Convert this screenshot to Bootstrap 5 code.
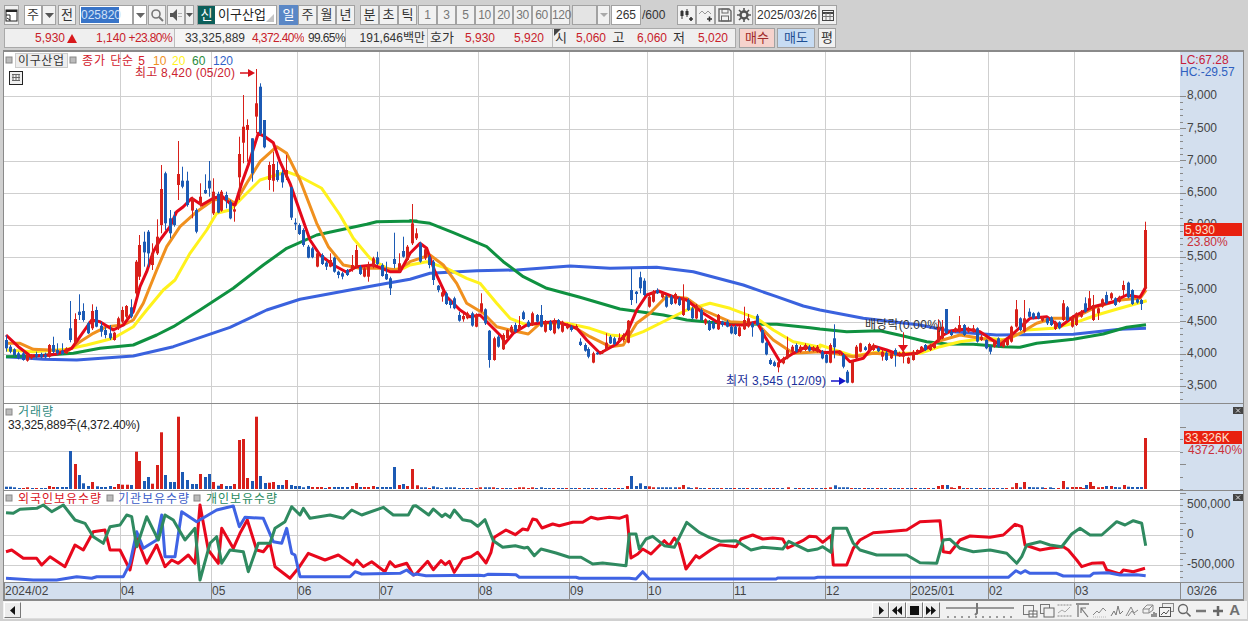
<!DOCTYPE html>
<html lang="ko">
<head>
  <meta charset="UTF-8" />
  <meta name="viewport" content="width=device-width, initial-scale=1.0"/>
  <title>이구산업 차트</title>
  <link href="https://cdn.jsdelivr.net/npm/bootstrap@5.3.0/dist/css/bootstrap.min.css" rel="stylesheet"/>
  <style>
    html, body { height: 100%; overflow: hidden; }

    body {
      background: #d0d0d0;
      color: #222;
      font: 12px/18px "Liberation Sans", "Noto Sans CJK KR", sans-serif;
    }

    .shell { padding: 5px 4px 0 4px; width: 1248px; }

    .tool-row { height: 20px; }
    .mt-quote { margin-top: 3px; }

    .tb {
      height: 20px;
      padding: 0;
      flex: none;
      border: 1px solid #a2a2a2;
      border-radius: 0;
      background: #f1f1f1;
      color: #333;
      font-size: 13px;
      line-height: 18px;
      text-align: center;
    }
    .tb svg { display: block; margin: auto; }
    .tb-num { color: #777; font-size: 12px; letter-spacing: -.3px; }
    .tb-on { background: #5a87c6; color: #fff; border-color: #5a87c6; }
    .tb-white { background: #fff; }
    .tb-blank { background: #e4e4e4; }
    .tb-small { font-size: 12px; }

    .w9 { width: 9px; } .w13 { width: 13px; } .w14 { width: 14px; } .w15 { width: 15px; }
    .w18 { width: 18px; } .w19 { width: 19px; } .w25 { width: 25px; } .w30 { width: 30px; }
    .w36 { width: 36px; } .w38 { width: 38px; } .w54 { width: 54px; } .w64 { width: 64px; } .w80 { width: 80px; }

    .gap1 { margin-left: 1px; } .gap2 { margin-left: 2px; } .gap3 { margin-left: 3px; } .gap5 { margin-left: 5px; }

    .code-box { justify-content: flex-start; text-align: left; padding-left: 1px; }
    .code-sel { background: #3874c8; color: #cfe0f7; display: inline-block; width: 38px; line-height: 16px; font-size: 12px; }
    .name-tag { background: #0c5f5a; color: #fff; width: 17px; height: 18px; line-height: 18px; text-align: center; font-size: 13px; flex: none; }
    .name-text { padding-left: 3px; font-size: 13px; color: #222; }
    .name-corner {
      position: absolute; right: 2px; bottom: 2px; width: 0; height: 0;
      border-left: 8px solid transparent; border-bottom: 8px solid #c4c4c4;
    }
    .count-text { width: 36px; flex: none; color: #333; line-height: 20px; padding-left: 1px; }

    .quote { width: 732px; height: 20px; flex: none; background: #efefef; border: 1px solid #a9a9a9; }
    .qc { flex: none; height: 18px; text-align: right; white-space: nowrap; }
    .qc-line { border-right: 1px solid #bdbdbd; }
    .qc-light { background: #f5f5f5; }
    .qc-h { font-size: 13px; text-align: center; }
    .qc-tight { letter-spacing: -.6px; }
    .red { color: #c8212a; }
    .dark { color: #333; }
    .q-tri { display: inline-block; margin-left: 2px; }
    .q16 { width: 16px; } .q24 { width: 24px; } .q25 { width: 25px; } .q28 { width: 28px; }
    .q36 { width: 36px; } .q37 { width: 37px; } .q39 { width: 39px; } .q42 { width: 42px; }
    .q48 { width: 48px; } .q49 { width: 49px; padding-right: 2px; } .q58 { width: 58px; padding-right: 8px; }
    .q59 { width: 59px; } .q70 { width: 70px; } .q73 { width: 73px; padding-right: 1px; } .q82 { width: 82px; padding-right: 2px; }
    .corner-mark {
      position: absolute; left: 1px; top: 0; width: 0; height: 0;
      border-top: 7px solid #444; border-right: 7px solid transparent;
    }
    .buy { background: #f6d3cd; color: #a02a2a; }
    .sell { background: #c7dcf3; color: #1d4f94; }

    .chart-box {
      margin-top: 2px;
      margin-left: -1px;
      width: 1241px;
      border: 1px solid #8a8a8a;
      border-width: 2px 1px 0 1px;
      background: #fff;
    }
    .pane { border-bottom: 1px solid #8a8a8a; }
    .pane svg { display: block; flex: none; }
    .pane-main { height: 352px; }
    .pane-vol { height: 87px; }
    .pane-ind { height: 92px; }
    .pane-x { height: 18px; background: #d3dfee; border-bottom: 2px solid #8a8a8a; }

    .stext { font: 12px "Liberation Sans", "Noto Sans CJK KR", sans-serif; }

    .bottom-bar { height: 18px; margin-left: -1px; width: 1244px; padding: 0 7px 0 1px; background: #f1f1f1; }
    .sbtn {
      width: 17px; height: 16px; padding: 0; flex: none;
      background: #ececec; border: 1px solid; border-color: #fff #777 #777 #fff; border-radius: 0;
    }
    .sbtn svg { display: block; margin: auto; }
    .track { flex: 1; background: #f5f5f5; border-bottom: 1px solid #ddd; }
    .bi { flex: none; display: block; }
    .bi-a { font: bold 15px/18px "Liberation Sans", sans-serif; color: #707070; }
    .gap4 { margin-left: 4px; } .gap6 { margin-left: 6px; }
  </style>
</head>
<body>

<div class="shell">

  <!-- 1st toolbar -->
  <div class="tool-row d-flex">
    <button class="btn tb w15"><svg width="13" height="13"><rect x="1" y="1" width="11" height="11" fill="#fff" stroke="#222"/><rect x="1" y="1" width="11" height="2" fill="#222"/><path d="M1 6h4v6M2 9l3 2" fill="none" stroke="#222"/></svg></button>
    <button class="btn tb w18 gap5 tb-white">주</button>
    <button class="btn tb w14"><svg width="9" height="5"><path d="M0 0h9L4.500 5z" fill="#555"/></svg></button>
    <button class="btn tb w18 gap2">전</button>
    <button class="btn tb tb-white w54 gap3 d-flex align-items-center code-box"><span class="code-sel">025820</span></button>
    <button class="btn tb w14 tb-white"><svg width="9" height="5"><path d="M0 0h9L4.500 5z" fill="#666"/></svg></button>
    <button class="btn tb w18 gap1"><svg width="14" height="14"><circle cx="6" cy="6" r="4" fill="none" stroke="#777" stroke-width="1.600"/><path d="M9 9l4 4" stroke="#777" stroke-width="2"/></svg></button>
    <button class="btn tb w18 gap1"><svg width="14" height="14"><path d="M1 5h3l4-4v12l-4-4H1z" fill="#555"/><path d="M10 5v1M10 8v1M12 5v1M12 8v1" stroke="#777"/></svg></button>
    <button class="btn tb w9"><svg width="7" height="4"><path d="M0 0h7L3.500 4z" fill="#555"/></svg></button>
    <div class="tb tb-white d-flex gap3 position-relative w80">
      <span class="name-tag">신</span><span class="name-text">이구산업</span><span class="name-corner"></span>
    </div>
    <button class="btn tb w19 gap2 tb-on">일</button>
    <button class="btn tb w19">주</button>
    <button class="btn tb w19">월</button>
    <button class="btn tb w19">년</button>
    <button class="btn tb w19 gap5">분</button>
    <button class="btn tb w19">초</button>
    <button class="btn tb w19">틱</button>
    <button class="btn tb tb-num w19 gap1">1</button>
    <button class="btn tb tb-num w19">3</button>
    <button class="btn tb tb-num w19">5</button>
    <button class="btn tb tb-num w19">10</button>
    <button class="btn tb tb-num w19">20</button>
    <button class="btn tb tb-num w19">30</button>
    <button class="btn tb tb-num w19">60</button>
    <button class="btn tb tb-num w19">120</button>
    <div class="tb tb-blank w25 gap2"></div>
    <button class="btn tb w13"><svg width="8" height="4"><path d="M0 0h8L4 4z" fill="#aaa"/></svg></button>
    <div class="tb tb-white tb-small w30 gap1 text-end pe-1 dark">265</div>
    <div class="count-text">/600</div>
    <button class="btn tb w19"><svg width="15" height="14"><path d="M3 2v9M8 1v8" stroke="#333"/><rect x="1.500" y="3" width="3" height="5" fill="#333"/><rect x="6.500" y="3" width="3" height="4" fill="#333"/><path d="M10 11h4M12 9v4" stroke="#333" stroke-width="1.600"/></svg></button>
    <button class="btn tb w19"><svg width="15" height="14"><path d="M1 6l3-3 3 3 3-3 3 3" fill="none" stroke="#999"/><path d="M9 11h5M11.500 8.500v5" stroke="#333" stroke-width="1.600"/></svg></button>
    <button class="btn tb w19"><svg width="14" height="14"><path d="M1 1h10l2 2v10H1z" fill="none" stroke="#666" stroke-width="1.400"/><rect x="4" y="1" width="6" height="4" fill="none" stroke="#666"/><rect x="3.500" y="8" width="7" height="5" fill="none" stroke="#666"/></svg></button>
    <button class="btn tb w19"><svg width="14" height="14"><circle cx="7" cy="7" r="3.500" fill="none" stroke="#555" stroke-width="2.400"/><path d="M7 0v3M7 11v3M0 7h3M11 7h3M2 2l2 2M10 10l2 2M2 12l2-2M10 4l2-2" stroke="#555" stroke-width="1.600"/></svg></button>
    <div class="tb tb-white tb-small w64 gap2 dark">2025/03/26</div>
    <button class="btn tb w18"><svg width="12" height="11"><rect x=".5" y=".5" width="11" height="10" fill="none" stroke="#444"/><path d="M0 3h12" stroke="#444" stroke-width="2"/><path d="M.5 6.500h11M4 3v7M8 3v7" stroke="#777"/></svg></button>
  </div>

  <!-- 2nd toolbar -->
  <div class="tool-row d-flex mt-quote">
    <div class="quote d-flex">
      <div class="qc q73 red">5,930<svg class="q-tri" width="10" height="9"><path d="M5 0l5 9H0z" fill="#d8191c"/></svg></div>
      <div class="qc q48 red">1,140</div>
      <div class="qc q49 red qc-line qc-tight">+23.80%</div>
      <div class="qc q70 qc-light dark">33,325,889</div>
      <div class="qc q59 qc-light red qc-tight">4,372.40%</div>
      <div class="qc q42 qc-light dark qc-line qc-tight">99.65%</div>
      <div class="qc q82 dark qc-line">191,646백만</div>
      <div class="qc q28 dark qc-h">호가</div>
      <div class="qc q39 red">5,930</div>
      <div class="qc q58 red qc-line">5,920</div>
      <div class="qc q16 dark qc-h position-relative"><span class="corner-mark"></span>시</div>
      <div class="qc q37 red">5,060</div>
      <div class="qc q25 dark qc-h">고</div>
      <div class="qc q36 red">6,060</div>
      <div class="qc q24 dark qc-h">저</div>
      <div class="qc q37 red">5,020</div>
    </div>
    <button class="btn tb buy w36 gap3">매수</button>
    <button class="btn tb sell w38 gap2">매도</button>
    <button class="btn tb w18 gap3">평</button>
  </div>

  <!-- chart -->
  <div class="chart-box">
    <div class="pane pane-main d-flex">
      <svg id="mainPlot" width="1176" height="351" viewBox="4 52 1176 351"></svg>
      <svg id="mainAxis" width="63" height="351" viewBox="1180 52 63 351"></svg>
    </div>
    <div class="pane pane-vol d-flex">
      <svg id="volPlot" width="1176" height="86" viewBox="4 404 1176 86"></svg>
      <svg id="volAxis" width="63" height="86" viewBox="1180 404 63 86"></svg>
    </div>
    <div class="pane pane-ind d-flex">
      <svg id="indPlot" width="1176" height="91" viewBox="4 491 1176 91"></svg>
      <svg id="indAxis" width="63" height="91" viewBox="1180 491 63 91"></svg>
    </div>
    <div class="pane-x d-flex">
      <svg id="xAxis" width="1239" height="16" viewBox="4 583 1239 16"></svg>
    </div>
  </div>

  <!-- scroll + tools -->
  <div class="bottom-bar d-flex align-items-center">
    <button class="btn sbtn"><svg width="6" height="9"><path d="M5 0v9L0 4.500z" fill="#111"/></svg></button>
    <div class="track align-self-stretch"></div>
    <button class="btn sbtn"><svg width="6" height="9"><path d="M1 0v9l5-4.500z" fill="#111"/></svg></button>
    <button class="btn sbtn"><svg width="11" height="9"><path d="M5 0v9L0 4.500zM10 0v9L5 4.500z" fill="#111"/></svg></button>
    <button class="btn sbtn"><svg width="9" height="9"><rect width="9" height="9" fill="#111"/></svg></button>
    <button class="btn sbtn"><svg width="11" height="9"><path d="M0 0v9l5-4.500zM5 0v9l5-4.500z" fill="#111"/></svg></button>
    <svg class="bi gap5" width="72" height="17"><path d="M1 6h68" stroke="#999" stroke-width="2"/><path d="M32 1v10l-2 2" stroke="#777" stroke-width="2" fill="none"/><path d="M3 14v2M10 14v2M17 14v2M24 14v2M31 14v2M38 14v2M45 14v2M52 14v2M59 14v2M66 14v2" stroke="#444"/></svg>
    <svg class="bi gap6" width="15" height="15"><rect x=".5" y="2.500" width="10" height="9" fill="none" stroke="#777"/><rect x="6" y="8" width="8" height="6" fill="#fff" stroke="#666"/><path d="M10 8v6M6 11h8" stroke="#666"/></svg>
    <svg class="bi gap2" width="15" height="15"><rect x=".5" y="1.500" width="9" height="9" fill="none" stroke="#777"/><rect x="4" y="5" width="10" height="9" fill="#f1f1f1" stroke="#666"/></svg>
    <svg class="bi gap2" width="15" height="15"><path d="M.5 2h14M.5 13h14" stroke="#888" stroke-dasharray="2 1"/><path d="M1 10l4-3 3 2 5-5" stroke="#aaa" fill="none"/></svg>
    <svg class="bi gap3" width="15" height="15"><path d="M1 1h13" stroke="#333"/><path d="M3 2v12" stroke="#555"/><path d="M13 14L6 5M6 10V5h5" fill="none" stroke="#777" stroke-width="1.200"/></svg>
    <svg class="bi gap2" width="15" height="15"><path d="M1 12l4-4 2 2 4-5 3 3" fill="none" stroke="#888"/><path d="M1 14h13" stroke="#bbb" stroke-dasharray="1 1"/></svg>
    <svg class="bi gap3" width="14" height="15"><path d="M1 13l3-5 2 4 2-9 2 8 3-3" fill="none" stroke="#777"/></svg>
    <svg class="bi gap1" width="14" height="15"><path d="M1 13l5-9 3 6 4-3M3 13l4-5 3 4" fill="none" stroke="#888"/></svg>
    <svg class="bi gap3" width="15" height="15"><path d="M1 6l4-4h6v5l-4 3H1zM1 6h6v4M7 6l4-4" fill="none" stroke="#888"/><path d="M10 14v-3M12 14v-5M14 14v-4" stroke="#333"/></svg>
    <svg class="bi gap2" width="15" height="15"><rect x="3.500" y=".5" width="11" height="8" fill="#eee" stroke="#888"/><rect x=".5" y="4.500" width="11" height="9" fill="#f4f4f4" stroke="#555"/><path d="M2 12l3-3 2 2 3-4" fill="none" stroke="#555"/></svg>
    <svg class="bi gap3" width="14" height="15"><circle cx="6" cy="6" r="4.500" fill="none" stroke="#666" stroke-width="1.300"/><path d="M9.500 9.500l4 4" stroke="#666" stroke-width="1.600"/></svg>
    <svg class="bi gap4" width="12" height="15"><path d="M1 8h10" stroke="#777" stroke-width="2.500"/></svg>
    <svg class="bi gap5" width="12" height="15"><path d="M1 8h10M6 3v10" stroke="#666" stroke-width="2.500"/></svg>
    <span class="bi bi-a gap5">A</span>
  </div>
</div>

<script>
// all chart data is in page pixels, read at 3x (x = ox + z/3, y = oy + z/3)
const RED = '#e4081a', ORANGE = '#f0901e', YELLOW = '#fff21c', GREEN = '#0f9140', BLUE = '#3a62de';
const C_RED = '#d8201a', C_BLUE = '#1c5ab4';
const GRID = '#cfcfcf';
const V_GRID = [120, 211, 297, 379, 478, 569, 647, 733, 825, 910, 988, 1074];

const poly = (str, ox, oy) => str.trim().split(/\s+/).map(p => {
  const [a, b] = p.split(',').map(Number);
  return `${(ox + a / 3).toFixed(1)},${(oy + b / 3).toFixed(1)}`;
}).join(' ');

const line = (pts, color, w) => `<polyline points="${pts}" fill="none" stroke="${color}" stroke-width="${w}" stroke-linejoin="round"/>`;

const text = (x, y, s, color, extra = '') => `<text class="stext" x="${x}" y="${y}" fill="${color}" ${extra}>${s}</text>`;

function grid(hLines, top, bottom) {
  let out = '';
  for (const y of hLines) out += `<path d="M4 ${y + .5}H1180" stroke="${GRID}"/>`;
  for (const x of V_GRID) out += `<path d="M${x + .5} ${top}V${bottom}" stroke="${GRID}"/>`;
  return out;
}

const square = (x, y) => `<rect x="${x - 3}" y="${y - 3}" width="6" height="6" fill="#bbb" stroke="#888"/>`;

/* ---------- price pane ---------- */
const MA_RED = [
  [0, 90, '18,735 55,770 90,797 130,797 170,792 215,775 240,740 275,690 300,695 340,720 370,705 400,665 420,590 440,545 460,485 480,450 510,410 530,365 550,350 575,325 605,345 640,325 665,318 690,340 705,345 725,280 745,225 775,130 795,140 820,158 840,215 870,280 900,365 930,450 960,495 1000,525 1040,547 1070,530 1120,525 1170,545 1200,545 1225,500'],
  [410, 190, '0,190 30,160 50,175 75,245 110,320 150,360 180,380 210,375 240,405 275,440 285,460 310,430 350,405 395,398 440,395 500,415 530,450 570,490 620,462 650,430 680,360 710,315 745,303 790,320 830,330 880,370 920,395 960,405 1005,405 1040,395 1065,440 1110,515 1150,490 1185,472 1225,480'],
  [820, 210, '5,428 60,425 90,455 130,445 160,408 200,420 240,435 290,430 340,405 370,375 395,362 440,357 480,365 540,405 575,375 630,325 680,320 720,350 760,320 820,290 880,275 920,255 960,262 978,230']
];
const MA_ORANGE = [
  [0, 90, '18,760 60,760 100,778 150,780 200,785 240,755 280,730 320,710 370,705 400,690 430,640 470,540 500,470 540,410 590,365 640,330 680,325 705,340 740,280 780,215 830,170 860,190 900,270 950,400 985,470 1030,525 1080,535 1150,535 1190,540 1225,520'],
  [410, 190, '0,215 60,195 100,225 140,280 170,340 220,370 260,410 300,420 355,432 390,400 440,395 490,410 540,440 600,470 640,465 680,400 720,370 770,318 830,325 880,360 960,395 1040,400 1090,450 1150,490 1230,485'],
  [820, 210, '40,430 100,440 160,430 240,435 290,430 350,395 420,375 480,385 540,395 600,370 650,340 700,325 760,325 830,290 900,270 960,265 978,240']
];
const MA_YELLOW = [
  [0, 90, '18,780 100,785 200,778 260,765 340,745 400,710 440,660 490,600 525,570 570,490 620,420 650,370 690,360 720,330 780,270 860,245 900,260 965,295 1020,375 1060,445 1110,505 1170,540 1210,535'],
  [410, 190, '0,225 50,215 110,235 170,265 210,280 260,340 300,385 350,405 400,400 470,400 540,415 600,435 660,440 700,425 770,390 830,360 900,340 960,355 1040,385 1090,420 1150,455 1230,472'],
  [820, 210, '0,405 60,425 100,438 180,425 240,430 300,430 360,410 420,395 500,385 560,390 620,360 700,355 760,340 830,315 900,295 980,272']
];
const MA_GREEN = [
  [0, 90, '18,800 100,798 220,790 300,775 400,765 470,735 520,710 600,660 700,595 790,525 860,475 950,435 1100,403 1130,395 1250,393'],
  [410, 190, '0,92 60,100 130,128 230,170 280,215 340,260 410,295 510,322 630,357 760,375 830,390 900,397 1000,402 1100,403 1200,413 1230,417'],
  [820, 210, '0,357 80,365 180,362 250,378 320,395 380,402 460,403 550,410 600,412 650,400 760,388 850,372 920,352 978,344']
];
const MA_BLUE = [
  [0, 90, '18,800 130,808 230,810 400,798 520,770 690,712 800,660 900,628 1050,600 1170,578 1230,568'],
  [410, 190, '0,268 60,250 200,242 320,240 480,228 600,235 740,232 850,245 1000,285 1100,320 1180,348 1230,360'],
  [820, 210, '0,300 130,325 300,345 400,365 530,375 760,373 900,358 978,355']
];
const joined = parts => parts.map(([ox, oy, s]) => poly(s, ox, oy)).join(' ');

// x, wick top, body top, body bottom, wick bottom, colour
const CANDLES = [
  [0, 90, `19,735,750,775,785,b 31,765,770,785,790,b 43,775,778,795,800,b 55,785,790,805,808,b 70,785,790,810,812,b 82,792,795,812,815,r 94,792,795,805,808,r 108,785,792,800,805,b 122,788,792,802,805,b 135,788,794,802,805,b 148,762,765,800,803,r 160,740,765,785,790,b 172,760,780,790,795,b 185,760,782,792,795,b 198,772,775,790,792,r 211,633,715,750,757,b 225,670,687,760,765,r 238,613,665,675,690,b 250,640,663,690,695,b 263,695,700,730,732,b 277,643,663,715,720,r 289,650,660,710,712,b 302,695,707,725,740,b 316,712,720,735,745,b 329,705,730,745,750,b 341,725,728,750,752,r 355,680,685,715,720,r 367,650,660,695,700,r 379,645,648,680,685,r 394,628,652,680,685,b 407,510,515,610,620,r 418,435,465,560,570,r 433,425,455,487,530,b 445,420,425,490,530,b 457,460,490,525,540,r 472,388,440,490,495,r 484,225,297,405,430,r 496,245,250,400,420,b 510,360,385,430,445,b 523,365,378,405,410,b 535,153,252,285,330,r 547,230,272,290,295,b 562,245,272,345,350,b 575,320,325,362,385,r 587,355,360,425,430,b 601,280,320,345,350,r 614,253,300,310,312,b 626,213,272,295,320,b 640,265,305,370,375,r 653,305,312,368,370,b 664,300,305,362,365,r 678,305,315,330,355,b 691,330,335,385,388,b 703,345,358,365,395,r 718,140,192,262,330,r 730,15,110,158,220,r 742,88,105,120,215,r 757,145,145,250,275,b 769,-60,40,80,130,r 781,-20,-10,130,135,b 793,90,90,172,175,b 808,215,225,270,300,r 820,185,222,272,305,r 832,215,240,270,275,b 847,240,248,277,293,b 859,195,240,262,270,r 872,290,292,383,390,b 886,385,398,403,420,b 898,400,405,432,435,b 910,415,420,465,470,b 925,465,470,503,505,b 937,470,475,502,505,b 950,485,490,530,532,r 965,490,495,522,525,b 977,512,518,530,540,b 990,490,510,530,532,r 1003,500,503,545,548,b 1015,542,545,555,565,b 1027,545,550,560,568,b 1040,537,540,555,558,b 1055,495,525,540,545,r 1067,465,480,530,535,r 1080,525,530,552,555,b 1093,530,535,560,562,r 1105,515,525,560,575,r 1118,500,505,530,535,r 1132,485,502,522,525,b 1145,520,525,558,560,b 1157,515,552,568,570,b 1171,560,565,595,615,b 1183,428,507,522,535,b 1196,490,520,545,548,r 1210,440,483,500,503,b 1222,465,470,510,513,r`],
  [410, 190, `5,42,100,160,165,r 18,115,130,145,150,r 31,155,160,215,218,b 44,175,178,205,210,r 57,195,200,225,235,b 70,210,215,270,285,b 83,285,287,300,307,b 95,303,307,320,335,r 108,305,310,342,345,b 121,328,333,345,355,b 133,320,325,355,358,b 148,365,375,392,395,b 160,372,378,388,395,r 172,365,370,385,388,r 186,365,370,407,410,b 199,370,375,410,412,r 212,310,340,365,368,r 226,355,358,400,405,b 238,420,422,510,533,b 251,440,445,510,512,r 265,435,440,470,473,b 278,430,435,478,480,r 290,418,420,445,448,r 303,405,410,427,430,r 316,398,405,425,428,b 327,378,405,420,422,r 340,362,367,387,390,b 354,390,395,410,412,b 367,365,370,405,408,r 380,372,375,395,398,b 393,345,375,410,412,b 406,390,395,425,428,r 419,390,395,420,423,b 433,385,390,430,433,r 445,387,390,415,418,b 457,392,395,425,428,r 470,400,405,415,418,r 484,405,410,420,425,b 497,403,408,418,420,r 511,445,455,465,468,b 524,460,465,482,485,b 535,472,477,500,505,b 548,485,490,518,520,r 562,485,488,492,494,b 575,480,484,490,492,r 587,430,458,480,483,r 601,435,440,460,462,b 613,440,445,462,465,b 626,430,443,450,455,r 640,430,435,450,455,r 653,390,392,458,460,r 664,235,300,330,345,b 679,303,305,312,340,b 691,245,262,295,310,b 703,265,272,315,318,b 718,315,320,350,353,r 730,300,305,335,338,r 742,295,300,310,312,b 756,308,312,322,325,r 769,315,320,350,353,b 782,315,320,342,345,b 794,308,312,340,343,r 808,320,325,345,348,b 820,283,323,375,378,r 833,325,330,360,363,b 847,350,355,385,388,b 859,342,347,385,388,r 872,355,360,390,393,b 886,385,388,400,405,r 898,390,395,420,423,b 910,393,398,415,418,b 925,372,375,418,420,r 937,392,395,405,410,b 950,390,395,410,412,b 963,405,410,430,433,b 976,405,410,432,435,b 988,408,412,438,440,r 1003,350,390,418,420,r 1015,372,385,410,413,r 1027,395,400,412,440,b 1040,372,377,405,408,b 1055,415,420,458,460,b 1067,455,458,493,496,b 1079,505,510,522,525,b 1093,512,517,528,530,b 1105,512,517,532,547,r 1118,500,505,520,523,r 1132,440,480,505,508,r 1145,465,470,485,488,r 1157,460,465,485,488,b 1170,465,470,485,488,r 1185,460,465,480,483,r 1197,465,470,482,485,b 1210,468,472,482,485,r 1222,465,470,485,488,r`],
  [820, 210, `5,420,425,445,448,b 18,432,435,458,460,b 30,400,405,458,460,r 43,343,385,412,445,b 56,420,425,432,435,r 70,430,435,470,475,b 82,480,485,518,520,b 95,452,455,518,520,r 108,405,410,445,447,r 121,398,400,425,427,r 134,408,412,420,422,b 147,398,402,420,423,r 160,400,405,420,423,r 173,410,414,424,426,b 186,420,425,440,452,r 199,423,428,450,453,b 212,425,430,445,447,r 225,415,420,435,470,b 238,425,428,436,440,r 250,367,425,440,460,r 265,440,443,460,462,r 278,420,425,450,452,r 290,418,420,430,433,r 302,408,410,420,423,r 315,402,405,420,423,b 330,402,405,420,423,r 342,400,403,414,416,r 355,328,350,395,398,r 366,330,350,385,388,r 379,297,297,370,372,b 392,360,365,375,378,b 405,352,355,365,368,r 418,318,345,365,368,r 432,342,345,375,378,b 445,350,355,365,368,r 458,345,355,365,368,r 472,352,355,395,398,b 484,375,380,390,393,r 497,388,390,415,418,b 510,405,410,425,433,b 523,392,395,410,413,r 535,382,385,410,413,b 548,392,395,410,413,r 562,387,390,405,408,r 574,347,350,395,398,r 587,270,298,350,353,r 600,322,325,360,363,b 613,270,325,365,368,r 626,295,305,320,323,b 640,307,310,325,328,b 653,305,308,325,328,b 665,318,322,332,335,r 680,322,325,340,345,b 692,319,322,345,348,b 705,332,335,357,360,r 718,334,337,355,358,b 730,270,280,330,333,r 742,288,292,330,333,b 757,317,320,350,353,r 769,307,310,345,348,r 782,300,305,320,323,r 796,262,280,305,308,b 808,243,265,295,298,r 820,255,285,330,333,r 833,292,295,310,330,r 847,265,268,290,293,r 859,245,255,280,283,b 872,247,250,265,270,r 885,262,265,285,288,b 898,257,260,275,278,r 910,212,225,240,255,r 925,215,218,262,265,b 937,238,240,282,285,b 950,265,268,278,281,b 964,267,270,282,300,b 976,35,60,235,238,r`]
];

function candleMarkup() {
  let out = '';
  for (const [ox, oy, s] of CANDLES) {
    for (const item of s.trim().split(/\s+/)) {
      const [x, w1, b1, b2, w2, c] = item.split(',');
      const px = Math.round(ox + x / 3);
      const color = c === 'r' ? C_RED : C_BLUE;
      const top = oy + b1 / 3;
      out += `<path d="M${px + .5} ${(oy + w1 / 3).toFixed(1)}V${(oy + w2 / 3).toFixed(1)}" stroke="${color}"/>`;
      out += `<rect x="${px - 1}" y="${top.toFixed(1)}" width="3" height="${Math.max((b2 - b1) / 3, 1.5).toFixed(1)}" fill="${color}"/>`;
    }
  }
  return out;
}

const PRICE_Y = [96, 129, 161, 193, 225, 257, 290, 322, 354, 386];

let main = grid(PRICE_Y, 52, 403);
main += line(joined(MA_BLUE), BLUE, 3) + line(joined(MA_GREEN), GREEN, 3) + line(joined(MA_YELLOW), YELLOW, 3)
      + line(joined(MA_ORANGE), ORANGE, 3) + line(joined(MA_RED), RED, 3);
main += candleMarkup();
// legend
main += square(9, 60)
  + `<rect x="15.500" y="53.500" width="52" height="14" fill="#eee" stroke="#ccc"/>`
  + text(18, 65, '이구산업', '#333', 'textLength="46"')
  + square(73, 60)
  + text(82, 65, '종가 단순 5', '#d2202c', 'textLength="63"')
  + text(153, 65, '10', ORANGE) + text(172, 65, '20', YELLOW) + text(192, 65, '60', '#2a8a3c') + text(213, 65, '120', '#2f62c8');
main += `<rect x="9.500" y="71.500" width="13" height="13" fill="#f0f0f0" stroke="#222"/><path d="M12 74.500h8M12 77.500h8M12 80.500h8M13 74v7M16 74v7M19 74v7" stroke="#666"/>`;
// high / low marks
main += text(135, 77, '최고 8,420 (05/20)', '#cc2230', 'textLength="100"');
main += `<path d="M240 73h10" stroke="#d8101a" stroke-width="1.500"/><path d="M248 69l7 4-7 4z" fill="#d8101a"/><path d="M256.500 69V90" stroke="${C_RED}"/>`;
main += text(726, 385, '최저 3,545 (12/09)', '#1a2f9a', 'textLength="100"');
main += `<path d="M831 381h10" stroke="#1414c8" stroke-width="1.500"/><path d="M839 377l7 4-7 4z" fill="#1414c8"/>`;
main += text(865, 329, '배당락(0.00%)', '#333', 'textLength="77"');
main += `<path d="M898 345h10l-5 7z" fill="#e0101a"/>`;
document.getElementById('mainPlot').innerHTML = main;

function axisTicks(top, bottom, step, bigEvery, start) {
  let out = '';
  let n = 0;
  for (let y = start; y < bottom; y += step, n++) {
    if (y < top) continue;
    out += `<path d="M1180 ${Math.round(y) + .5}h${n % bigEvery === 0 ? 6 : 3}" stroke="#8a8a8a"/>`;
  }
  return out;
}

const redBox = (y, label) => `<rect x="1184" y="${y}" width="58" height="13" fill="#e8200f"/>` + text(1185, y + 11, label, '#fde0d0');

let mAxis = `<rect x="1180" y="52" width="63" height="351" fill="#d3dfee"/>`;
mAxis += axisTicks(84, 403, 6.44, 5, 96);
[['8,000', 96], ['7,500', 129], ['7,000', 161], ['6,500', 193], ['6,000', 225], ['5,500', 257], ['5,000', 290], ['4,500', 322], ['4,000', 354], ['3,500', 386]]
  .forEach(([s, y]) => { mAxis += text(1187, y + 3, s, '#444'); });
mAxis += text(1180, 64, 'LC:67.28', '#c8203a') + text(1180, 76, 'HC:-29.57', '#2f5fc0');
mAxis += redBox(223, '5,930') + text(1187, 246, '23.80%', '#c8303a');
document.getElementById('mainAxis').innerHTML = mAxis;

/* ---------- volume pane ---------- */
const VOL = [
  [0, 400, 267, 'b18,260 b30,260 b42,262 r82,262 b122,264 r148,258 r160,261 b172,261 b185,261 b198,261 b211,153 r225,192 b238,225 b250,250 b264,258 r277,246 b290,259 b303,261 b316,261 b329,258 r341,261 r355,252 r367,254 r380,254 b394,255 r407,155 r418,183 b433,243 b445,231 r457,251 r472,195 r484,97 b496,225 b510,246 b523,246 r535,50 b547,216 b562,240 b575,252 b587,252 r601,222 b614,231 b626,222 r640,246 b653,257 r664,252 b678,258 b691,258 r703,252 r718,120 r730,117 r742,234 b757,243 r769,50 b781,228 b794,249 r808,248 r820,246 b833,255 b847,255 r859,240 b872,255 b885,258 b898,258 b910,262 b925,258 r937,261 r950,261 r963,261 r988,261 b1003,261 b1015,261 b1027,261 b1040,261 r1055,258 r1067,249 b1080,261 r1093,261 r1105,261 r1118,258 b1132,261 b1145,261 b1157,261 b1171,261 b1183,201 r1196,255 b1210,252 r1222,258 r1235,207'],
  [416, 404, 257, 'r2,244 b14,250 b26,250 r38,252 b52,247 b64,250 b76,252 b89,250 b102,250 b115,250 r191,250 b206,250 b218,250 r232,250 r310,250 r322,250 r348,250 b376,250 r632,246 b646,216 b660,246 b672,238 b686,246 r700,247 r712,250 b725,250 b738,250 b750,250 b763,250 b776,250 r788,250 r802,243 b815,250 r840,250 r1115,250 r1243,250'],
  [830, 400, 267, 'b14,256 b26,262 b40,262 b52,262 r325,258 r337,255 b350,255 r363,262 r388,258 r545,262 r557,249 b570,262 r583,246 b596,261 b609,262 b622,262 b635,262 b661,262 r700,243 b712,262 r725,261 r738,261 r751,261 b767,255 r779,246 r790,258 r803,262 r816,261 b829,258 r842,258 b855,261 b868,262 r881,255 b894,260 b907,261 b920,261 b933,261 r946,114']
];

let vol = grid([451], 404, 490);
const taken = [];
for (const [ox, oy, base, s] of VOL) {
  for (const item of s.split(' ')) {
    const color = item[0] === 'r' ? C_RED : C_BLUE;
    const [zx, zy] = item.slice(1).split(',').map(Number);
    const x = Math.round(ox + zx / 3);
    const y = oy + zy / 3;
    taken.push(x);
    vol += `<rect x="${x - 1}" y="${y.toFixed(1)}" width="3" height="${(489 - y).toFixed(1)}" fill="${color}"/>`;
  }
}
// the quiet days are only a thin dash on the base line
for (let i = 0, x = 6; x < 1142; i++, x += 4.31) {
  if (taken.some(t => Math.abs(t - x) < 2.5)) continue;
  vol += `<rect x="${Math.round(x) - 1}" y="488" width="3" height="1" fill="${i % 3 === 1 ? C_RED : C_BLUE}"/>`;
}
vol += square(9, 412) + text(18, 416, '거래량', '#2f8a80', 'textLength="35"');
vol += text(8, 429, '33,325,889주(4,372.40%)', '#222', 'textLength="132"');
document.getElementById('volPlot').innerHTML = vol;

const closeIcon = y => `<rect x="1233" y="${y}" width="10" height="7" fill="#444"/><path d="M1236 ${y + 1.500}l4 4M1240 ${y + 1.500}l-4 4" stroke="#ddd"/>`;

let vAxis = `<rect x="1180" y="404" width="63" height="86" fill="#d3dfee"/>`;
vAxis += axisTicks(420, 490, 12.4, 3, 427) + closeIcon(407);
vAxis += redBox(431, '33,326K') + text(1188, 454, '4372.40%', '#c8303a');
document.getElementById('volAxis').innerHTML = vAxis;

/* ---------- holdings pane ---------- */
const IND_RED = [
  [0, 400, '18,455 35,450 70,475 110,475 125,495 150,470 195,500 225,435 250,450 280,395 315,390 330,450 360,450 390,510 410,415 440,490 470,435 495,500 515,480 535,490 565,465 585,490 600,315 625,450 655,490 665,385 700,445 720,400 742,360 770,450 790,455 810,430 825,500 870,535 895,505 925,460 975,480 1015,465 1060,495 1070,480 1090,500 1115,485 1155,515 1170,485 1185,500 1220,490 1240,525'],
  [416, 404, '0,510 35,472 52,497 75,470 88,482 100,472 115,505 140,465 165,458 185,445 210,477 225,445 235,400 270,378 298,392 320,375 335,378 350,345 362,348 378,372 410,360 430,365 470,355 500,355 525,340 545,345 580,340 610,343 633,335 640,410 645,462 665,450 680,435 705,450 725,430 745,410 760,425 775,402 790,420 810,495 840,455 850,462 885,437 910,422 960,428 975,405 1010,393 1040,405 1070,402 1100,405 1115,432 1160,410 1180,397 1200,398 1220,415 1245,395'],
  [830, 400, '10,495 50,495 70,445 90,420 130,398 170,395 230,390 270,365 330,362 340,455 360,458 390,420 420,408 480,412 520,405 555,373 575,380 585,435 630,450 660,445 700,440 715,450 740,480 755,500 785,490 820,488 830,510 870,522 880,510 910,515 945,505']
];
const IND_GREEN = [
  [0, 400, '18,338 40,340 60,328 110,325 130,315 155,335 190,315 225,360 255,370 280,410 310,430 330,380 360,375 380,345 395,350 410,440 440,350 475,420 495,345 520,360 555,420 585,385 600,540 630,430 650,410 665,490 690,450 730,455 745,515 775,430 810,430 825,385 855,365 875,320 900,345 910,325 930,355 990,345 1030,355 1055,330 1085,345 1150,322 1180,345 1225,345 1240,318'],
  [416, 404, '0,305 38,333 52,315 78,338 88,330 102,340 115,318 140,347 165,352 185,367 207,347 232,410 260,430 298,425 325,432 335,430 355,455 375,435 395,440 420,447 460,460 495,460 530,480 560,477 630,485 640,390 660,390 670,435 690,405 710,397 745,425 775,430 790,400 812,355 850,385 880,400 915,412 960,410 1005,438 1040,430 1100,435 1118,412 1175,440 1205,435 1220,428 1245,445'],
  [830, 400, '10,385 50,385 70,430 90,450 140,465 230,465 270,488 320,490 340,420 360,418 390,445 430,455 480,450 530,460 560,490 575,470 590,435 630,425 660,435 695,440 725,402 750,385 780,405 815,405 860,365 885,375 910,362 935,370 947,437']
];
const IND_BLUE = [
  [0, 400, '18,535 100,540 170,540 230,530 275,535 290,530 370,530 390,490 410,395 430,445 470,420 485,345 495,470 525,470 545,335 590,365 650,330 700,318 718,380 735,352 790,355 820,425 845,430 860,385 875,460 885,465 900,530 1050,530 1065,515 1085,522 1200,520 1220,510 1240,525'],
  [416, 404, '0,510 30,515 190,514 205,515 215,511 300,512 310,520 480,520 490,523 640,523 660,525 680,503 700,525 1080,525 1085,522 1195,522 1205,520 1245,520'],
  [830, 400, '10,532 535,532 558,512 572,520 585,512 600,520 680,520 700,528 780,528 790,520 835,518 870,525 920,524 947,527']
];

let ind = grid([505, 535, 565], 491, 582);
ind += line(joined(IND_RED), '#e8081c', 3) + line(joined(IND_BLUE), '#3f63e4', 3) + line(joined(IND_GREEN), '#2f8a60', 3);
ind += square(9, 498) + text(18, 503, '외국인보유수량', '#d8121c', 'textLength="83"');
ind += square(110, 498) + text(118, 503, '기관보유수량', '#3a5cc8', 'textLength="71"');
ind += square(197, 498) + text(206, 503, '개인보유수량', '#2a8a60', 'textLength="71"');
document.getElementById('indPlot').innerHTML = ind;

let iAxis = `<rect x="1180" y="491" width="63" height="91" fill="#d3dfee"/>`;
iAxis += axisTicks(491, 582, 6, 5, 505 - 12) + closeIcon(494);
[['500,000', 505], ['0', 535], ['-500,000', 565]].forEach(([s, y]) => {
  iAxis += text(1187, y + 3, s, '#444');
});
document.getElementById('indAxis').innerHTML = iAxis;

/* ---------- time axis ---------- */
const MONTHS = [[4, '2024/02'], [120, '04'], [211, '05'], [297, '06'], [379, '07'], [478, '08'], [569, '09'], [647, '10'], [733, '11'], [825, '12'], [910, '2025/01'], [988, '02'], [1074, '03']];
let xa = '';
for (const [x, s] of MONTHS) {
  xa += `<path d="M${x + .5} 583V599" stroke="#8a8a8a"/>` + text(x + 1, 595, s, '#444');
}
xa += `<path d="M1180.500 583V599" stroke="#8a8a8a"/>` + text(1187, 595, '03/26', '#444');
document.getElementById('xAxis').innerHTML = xa;
</script>

<script src="https://cdn.jsdelivr.net/npm/bootstrap@5.3.0/dist/js/bootstrap.bundle.min.js"></script>
</body>
</html>
